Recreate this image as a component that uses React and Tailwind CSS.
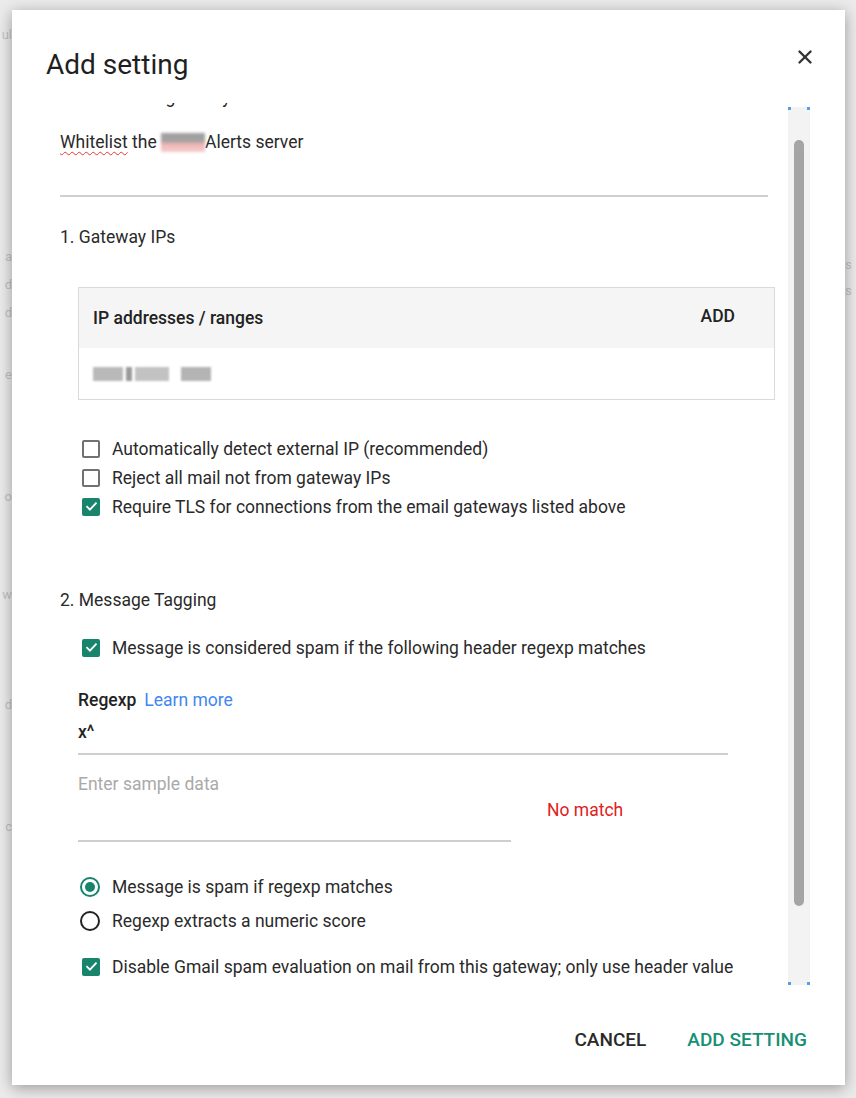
import { X } from 'lucide-react'

function Checkbox({ checked }) {
  if (checked) {
    return (
      <span className="w-[18px] h-[18px] rounded-[2px] bg-[#17846b] flex items-center justify-center shrink-0">
        <svg viewBox="0 0 24 24" className="w-[15px] h-[15px]" fill="none" stroke="white" strokeWidth="3" strokeLinecap="square">
          <path d="M5 12.5l4.5 4.5L19 7" />
        </svg>
      </span>
    )
  }
  return <span className="w-[18px] h-[18px] rounded-[2px] border-2 border-[#717171] shrink-0" />
}

function Radio({ checked }) {
  if (checked) {
    return (
      <span className="w-[20px] h-[20px] rounded-full border-2 border-[#17846b] flex items-center justify-center shrink-0">
        <span className="w-[10px] h-[10px] rounded-full bg-[#17846b]" />
      </span>
    )
  }
  return <span className="w-[20px] h-[20px] rounded-full border-2 border-[#222] shrink-0" />
}

function CheckRow({ checked, children }) {
  return (
    <div className="flex items-center h-[29px] pl-[22px] gap-[12px]">
      <Checkbox checked={checked} />
      <span className="text-[17.5px] leading-[24px] text-[#2a2a2a] whitespace-nowrap">{children}</span>
    </div>
  )
}

function RadioRow({ checked, children }) {
  return (
    <div className="flex items-center h-[28px] pl-[20px] gap-[12px]">
      <Radio checked={checked} />
      <span className="text-[17.5px] leading-[24px] text-[#2a2a2a] whitespace-nowrap">{children}</span>
    </div>
  )
}

const bgLeft = [
  ['ul', 'mt-[24px]'],
  ['a', 'mt-[200px]'],
  ['d', 'mt-[6px]'],
  ['d', 'mt-[6px]'],
  ['e', 'mt-[40px]'],
  ['o', 'mt-[100px]'],
  ['w', 'mt-[76px]'],
  ['d', 'mt-[88px]'],
  ['c', 'mt-[100px]'],
]

export default function App() {
  return (
    <div className="relative w-[856px] h-[1098px] bg-[#ebebeb] overflow-hidden" style={{ fontFamily: 'Roboto, "Noto Sans", sans-serif' }}>
      {/* page behind the dialog */}
      <div className="flex justify-between">
        <div className="flex flex-col w-[12px]">
          {bgLeft.map(([t, m], i) => (
            <div key={i} className={`${m} flex justify-end h-[22px] text-[13px] leading-[22px] text-[#c2c2c2] whitespace-nowrap`}>
              {t}
            </div>
          ))}
        </div>
        <div className="flex flex-col w-[11px] pt-[254px]">
          <div className="h-[22px] text-[13px] leading-[22px] text-[#c2c2c2]">s</div>
          <div className="mt-[4px] h-[22px] text-[13px] leading-[22px] text-[#c2c2c2]">s</div>
        </div>
      </div>

      {/* dialog */}
      <div className="absolute top-[10px] left-[12px] w-[833px] h-[1075px] bg-white shadow-[0_3px_14px_rgba(0,0,0,0.35)] flex flex-col">
        {/* header */}
        <div className="h-[93px] flex items-start justify-between pl-[34px] pr-[29px] shrink-0">
          <h1 className="mt-[38px] text-[28px] leading-[34px] text-[#1f1f1f] font-normal">Add setting</h1>
          <button className="mt-[36px] text-[#333]">
            <X size={22} strokeWidth={2.6} />
          </button>
        </div>

        {/* scroll area */}
        <div className="h-[882px] flex shrink-0">
          <div className="w-[776px] pl-[48px] overflow-hidden shrink-0">
            {/* cut-off line above */}
            <div className="h-[8px] overflow-hidden">
              <div className="-mt-[18px] text-[17.5px] leading-[24px] text-[#222] whitespace-nowrap">Inbound mail gateway</div>
            </div>

            <div className="mt-[19px] flex items-center text-[17.5px] leading-[24px] text-[#2a2a2a] whitespace-nowrap">
              <span className="underline decoration-wavy decoration-[#e53935] decoration-1 underline-offset-[3px]">Whitelist</span>
              <span>&nbsp;the&nbsp;</span>
              <span className="inline-block w-[44px] h-[19px] blur-[1.5px] bg-[linear-gradient(180deg,#9c9c9c_0%,#a8a4a4_45%,#eeb4b4_58%,#f6cccc_100%)]" />
              <span>Alerts server</span>
            </div>

            <div className="mt-[41px] h-[2px] w-[708px] bg-[#d0d0d0]" />

            <div className="mt-[28px] text-[17.5px] leading-[24px] text-[#2a2a2a]">1. Gateway IPs</div>

            <div className="mt-[38px] ml-[18px] w-[697px] border border-[#dadada]">
              <div className="h-[60px] bg-[#f5f5f5] flex items-center justify-between pl-[14px] pr-[39px]">
                <span className="text-[17.5px] leading-[24px] font-medium text-[#222]">IP addresses / ranges</span>
                <span className="text-[17.5px] leading-[24px] font-medium text-[#222] -mt-[5px]">ADD</span>
              </div>
              <div className="h-[51px] flex items-center pl-[14px]">
                <div className="flex items-center gap-[3px] blur-[1.2px]">
                  <span className="w-[30px] h-[14px] bg-[#b9b9b9]" />
                  <span className="w-[6px] h-[14px] bg-[#9a9a9a]" />
                  <span className="w-[34px] h-[14px] bg-[#c2c2c2]" />
                  <span className="w-[6px] h-[14px] bg-[#ffffff]" />
                  <span className="w-[30px] h-[14px] bg-[#b4b4b4]" />
                </div>
              </div>
            </div>

            <div className="mt-[34px]">
              <CheckRow>Automatically detect external IP (recommended)</CheckRow>
              <CheckRow>Reject all mail not from gateway IPs</CheckRow>
              <CheckRow checked>Require TLS for connections from the email gateways listed above</CheckRow>
            </div>

            <div className="mt-[67px] text-[17.5px] leading-[24px] text-[#2a2a2a]">2. Message Tagging</div>

            <div className="mt-[21px]">
              <CheckRow checked>Message is considered spam if the following header regexp matches</CheckRow>
            </div>

            <div className="ml-[18px]">
              <div className="mt-[26px] flex items-center gap-[8px] text-[17.5px] leading-[24px]">
                <span className="font-medium text-[#222]">Regexp</span>
                <span className="text-[#4285f4]">Learn more</span>
              </div>
              <div className="mt-[8px] text-[17.5px] leading-[24px] font-medium text-[#222]">x^</div>
              <div className="mt-[9px] h-[2px] w-[650px] bg-[#cfcfcf]" />

              <div className="mt-[17px] flex items-start">
                <div className="w-[433px]">
                  <div className="text-[17.5px] leading-[24px] text-[#a9a9a9]">Enter sample data</div>
                  <div className="mt-[44px] h-[2px] bg-[#cfcfcf]" />
                </div>
                <div className="ml-[36px] mt-[26px] text-[17.5px] leading-[24px] text-[#e0201b]">No match</div>
              </div>
            </div>

            <div className="mt-[31px] flex flex-col gap-[6px]">
              <RadioRow checked>Message is spam if regexp matches</RadioRow>
              <RadioRow>Regexp extracts a numeric score</RadioRow>
            </div>

            <div className="mt-[17px]">
              <CheckRow checked>Disable Gmail spam evaluation on mail from this gateway; only use header value</CheckRow>
            </div>
          </div>

          {/* scrollbar */}
          <div className="mt-[4px] w-[22px] h-[878px] bg-[#f3f3f3] flex flex-col justify-between">
            <div className="flex justify-between">
              <span className="w-[3px] h-[3px] bg-[#5b9bea]" />
              <span className="w-[3px] h-[3px] bg-[#5b9bea]" />
            </div>
            <div className="flex-1 flex justify-center pt-[30px] pb-[76px]">
              <div className="w-[10px] rounded-full bg-[#a5a5a5]" />
            </div>
            <div className="flex justify-between">
              <span className="w-[3px] h-[3px] bg-[#5b9bea]" />
              <span className="w-[3px] h-[3px] bg-[#5b9bea]" />
            </div>
          </div>
        </div>

        {/* footer */}
        <div className="flex-1 flex justify-end items-start pt-[43px] pr-[38px] gap-[41px]">
          <button className="text-[19px] leading-[24px] font-medium text-[#2a2a2a]">CANCEL</button>
          <button className="text-[19px] leading-[24px] font-medium text-[#178f74]">ADD SETTING</button>
        </div>
      </div>
    </div>
  )
}
